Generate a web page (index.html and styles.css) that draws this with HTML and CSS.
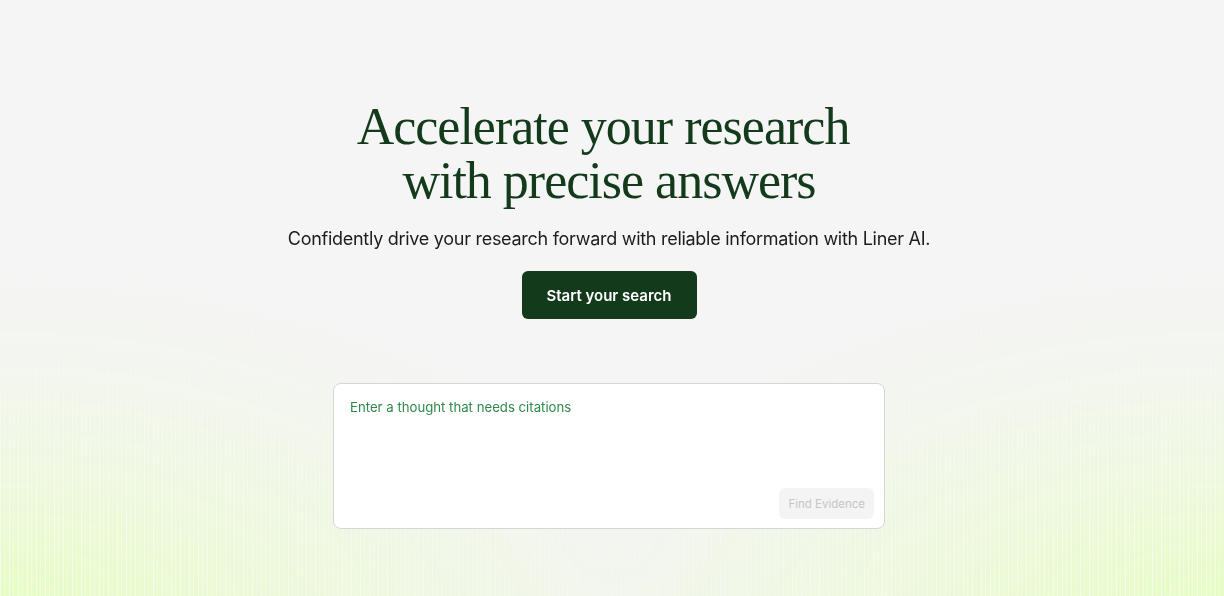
FILE: index.html
```html
<!DOCTYPE html>
<html>
<head>
  <title>Liner AI</title>
  <meta charset="UTF-8">
  <meta name="viewport" content="width=device-width, initial-scale=1.0">
  <link rel="stylesheet" href="styles.css">
</head>
<body>
  <div class="glow"></div>

  <main class="hero">
    <h1>Accelerate your research&nbsp;<br>with precise answers</h1>
    <p class="lead">Confidently drive your research forward with reliable information with Liner AI.</p>
    <a class="btn" href="#">Start your search</a>

    <div class="ask">
      <textarea class="ask-input" placeholder="Enter a thought that needs citations"></textarea>
      <div class="ask-bar">
        <button class="ask-btn" disabled>Find Evidence</button>
      </div>
    </div>
  </main>
</body>
</html>
```

FILE: styles.css
```css
html, body {
  height: 100%;
}
body {
  margin: 0;
  background-color: #f5f5f5;
  font-family: "Inter", "Noto Sans", sans-serif;
  color: #1c1c1c;
  overflow: hidden;
}
/* 下の角の黄緑グロー + 縦ストライプ */
.glow {
  position: fixed;
  left: 0;
  right: 0;
  bottom: 0;
  height: 340px;
  z-index: 0;
  background:
    repeating-linear-gradient(90deg, rgba(255, 255, 255, 0.6) 0 1px, rgba(255, 255, 255, 0) 1px 4px, rgba(255, 255, 255, 0.35) 4px 5px, rgba(255, 255, 255, 0) 5px 9px),
    linear-gradient(180deg, #f1f8e6 0%, #e6fcc4 100%);
  -webkit-mask-image:
    radial-gradient(ellipse 640px 330px at 0% 100%, #000 0%, rgba(0, 0, 0, 0.5) 45%, transparent 100%),
    radial-gradient(ellipse 640px 330px at 100% 100%, #000 0%, rgba(0, 0, 0, 0.5) 45%, transparent 100%),
    linear-gradient(180deg, transparent 50%, rgba(0, 0, 0, 0.12) 100%);
  mask-image:
    radial-gradient(ellipse 640px 330px at 0% 100%, #000 0%, rgba(0, 0, 0, 0.5) 45%, transparent 100%),
    radial-gradient(ellipse 640px 330px at 100% 100%, #000 0%, rgba(0, 0, 0, 0.5) 45%, transparent 100%),
    linear-gradient(180deg, transparent 50%, rgba(0, 0, 0, 0.12) 100%);
}
.hero {
  position: relative;
  z-index: 1;
  display: flex;
  flex-direction: column;
  align-items: center;
  padding-top: 100px;
  padding-right: 6px;
  text-align: center;
}
h1 {
  margin: 0;
  font-family: "Liberation Serif", "DejaVu Serif", serif;
  font-weight: 400;
  font-size: 52px;
  line-height: 54px;
  letter-spacing: -1px;
  color: #143a1c;
}
.lead {
  margin: 18px 0 0;
  font-size: 18px;
  line-height: 26px;
  letter-spacing: -0.28px;
  color: #1c1c1c;
}
.btn {
  display: flex;
  align-items: center;
  justify-content: center;
  margin-top: 19px;
  width: 175px;
  height: 48px;
  border-radius: 6px;
  background-color: #133a1b;
  color: #fff;
  font-size: 15px;
  font-weight: 600;
  text-decoration: none;
}
.ask {
  display: flex;
  flex-direction: column;
  margin-top: 64px;
  width: 550px;
  height: 144px;
  background-color: #fff;
  border: 1px solid #d6d6d6;
  border-radius: 8px;
  text-align: left;
}
.ask-input {
  flex: 1;
  border: none;
  outline: none;
  resize: none;
  background: transparent;
  padding: 14px 16px 0;
  font-family: "Inter", "Noto Sans", sans-serif;
  font-size: 13.2px;
  line-height: 18px;
  color: #1c1c1c;
}
.ask-input::placeholder {
  color: #2f8a4a;
}
.ask-bar {
  display: flex;
  justify-content: flex-end;
  padding: 0 10px 9px;
}
.ask-btn {
  height: 31px;
  padding: 0 9px;
  border: none;
  border-radius: 6px;
  background-color: #f4f4f4;
  color: #c6c6c6;
  font-family: "Inter", "Noto Sans", sans-serif;
  font-size: 11.5px;
}
```
